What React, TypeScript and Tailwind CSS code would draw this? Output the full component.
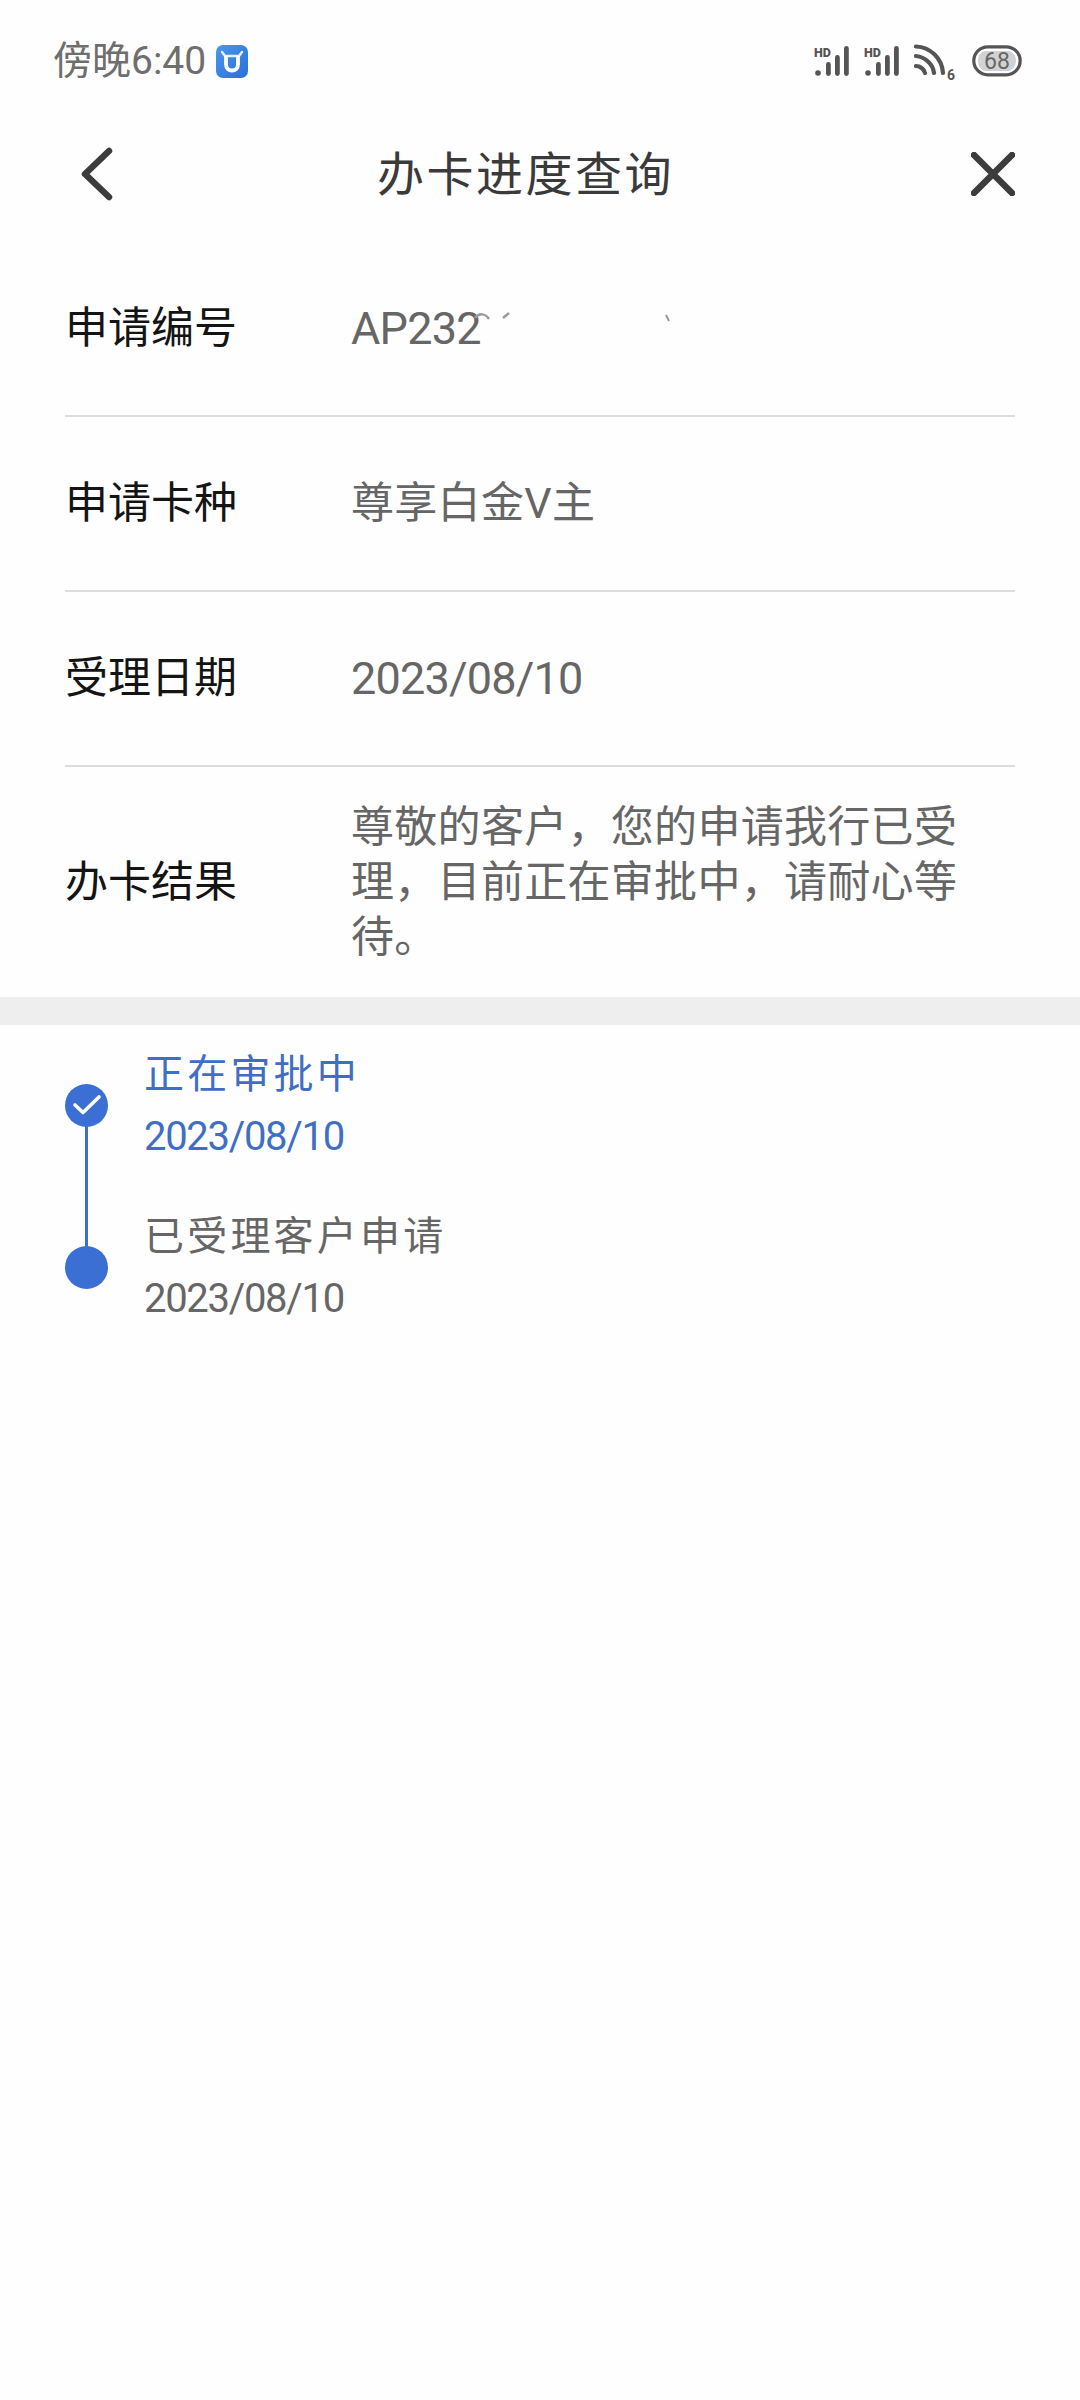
const font = { fontFamily: '"Roboto", "Noto Sans CJK SC", sans-serif' };

function Signal() {
  return (
    <svg width="36" height="32" viewBox="0 0 36 32" className="block">
      <text x="0" y="11.500" fontSize="12.500" fontWeight="900" fill="#555" fontFamily="Roboto, sans-serif">HD</text>
      <circle cx="4" cy="28" r="2.800" fill="#555" />
      <rect x="12" y="17" width="4.800" height="14" rx="2.400" fill="#555" />
      <rect x="21" y="10" width="4.800" height="21" rx="2.400" fill="#555" />
      <rect x="30" y="1" width="4.800" height="30" rx="2.400" fill="#555" />
    </svg>
  );
}

function Wifi() {
  return (
    <svg width="44" height="40" viewBox="0 0 44 40" className="block mt-[6px]">
      <g fill="none" stroke="#555" strokeWidth="4.200" strokeLinecap="round">
        <path d="M2 2.500 C16 3 28 14 29 29" />
        <path d="M2 12 C11 13 19 20 20 29" />
        <path d="M2 22 C6 22 10 25 11 29" />
      </g>
      <text x="33" y="36" fontSize="14" fontWeight="700" fill="#555" fontFamily="Roboto, sans-serif">6</text>
    </svg>
  );
}

function Battery() {
  return (
    <svg width="50" height="32" viewBox="0 0 50 32" className="block">
      <rect x="1.800" y="1.800" width="46.400" height="28" rx="14" fill="#fff" stroke="#555" strokeWidth="3.200" />
      <path d="M14 6 H36 C40 6 44 10.500 44 15.800 C44 21 40 26 36 26 H14 C9 26 6 21 6 15.800 C6 10.500 9 6 14 6 Z" fill="#d2d2d2" />
      <text x="25" y="24" textAnchor="middle" fontSize="23" fill="#666" fontFamily="Roboto, sans-serif">68</text>
    </svg>
  );
}

function CowBadge() {
  return (
    <svg width="32" height="33" viewBox="0 0 32 33" className="block ml-[10px]">
      <defs>
        <linearGradient id="cow" x1="0" y1="0" x2="1" y2="1">
          <stop offset="0" stopColor="#4b97ea" />
          <stop offset="1" stopColor="#2a6fdc" />
        </linearGradient>
      </defs>
      <rect width="32" height="33" rx="7" fill="url(#cow)" />
      <path d="M6 7 L9 11 H23 L26 7" fill="none" stroke="#e6f1ff" strokeWidth="2.400" strokeLinecap="round" strokeLinejoin="round" />
      <path d="M10 11 V19.500 C10 23 12.500 25.500 16 25.500 C19.500 25.500 22 23 22 19.500 V11" fill="none" stroke="#fff" strokeWidth="3.800" />
    </svg>
  );
}

function Row({ label, children, tall, digits }: { label: string; children: React.ReactNode; tall?: boolean; digits?: boolean }) {
  return (
    <div className={`flex items-center ${tall ? 'h-[230px]' : 'h-[175px] border-b-2 border-[#dcdcdc]'}`}>
      <div className="w-[286px] shrink-0 text-[43px] leading-[55px] text-[#141414]">{label}</div>
      <div className={`w-[620px] leading-[55px] text-[#666666] ${digits ? 'text-[45px] tracking-[-0.8px]' : 'text-[43px] tracking-[0.3px]'}`}>{children}</div>
    </div>
  );
}

function Step({ title, date, active, check }: { title: string; date: string; active?: boolean; check?: boolean }) {
  const color = active ? 'text-[#3f6fc4]' : 'text-[#666666]';
  return (
    <div className="flex items-center h-[162px]">
      <div className="w-[43px] h-[43px] rounded-full bg-[#3b6fd4] flex items-center justify-center shrink-0 z-10 mt-[-2px]">
        {check && (
          <svg width="30" height="24" viewBox="0 0 30 24">
            <path d="M3 12 L11 19.500 L27 4" fill="none" stroke="#fff" strokeWidth="3.600" strokeLinecap="round" strokeLinejoin="round" />
          </svg>
        )}
      </div>
      <div className="ml-[36px]">
        <div className={`text-[40px] leading-[62px] tracking-[3.200px] ${color}`}>{title}</div>
        <div className={`text-[40px] leading-[62px] tracking-[-1.3px] ${color}`}>{date}</div>
      </div>
    </div>
  );
}

export default function App() {
  return (
    <div className="w-[1080px] min-h-[2400px] bg-[#fefefe] overflow-hidden" style={font}>
      <div className="h-[122px] flex items-center justify-between pl-[53px] pr-[58px]">
        <div className="flex items-center">
          <span className="text-[39px] leading-none text-[#6e6e6e]">傍晚6:40</span>
          <CowBadge />
        </div>
        <div className="flex items-center gap-[14px]">
          <Signal />
          <Signal />
          <Wifi />
          <Battery />
        </div>
      </div>

      <div className="h-[104px] flex items-center justify-between pl-[80px] pr-[65px]">
        <svg width="34" height="54" viewBox="0 0 34 54" className="block">
          <path d="M29 4 L5 27 L29 50" fill="none" stroke="#3c3c3c" strokeWidth="6.500" strokeLinecap="round" strokeLinejoin="round" />
        </svg>
        <div className="text-[47px] leading-none tracking-[2.500px] text-[#3a3a3a] mr-[34px]">办卡进度查询</div>
        <svg width="44" height="44" viewBox="0 0 44 44" className="block">
          <path d="M3 3 L41 41 M41 3 L3 41" fill="none" stroke="#3c3c3c" strokeWidth="6.500" strokeLinecap="round" />
        </svg>
      </div>

      <div className="mt-[16px] px-[65px] w-[1080px]">
        <Row label="申请编号" digits>
          <span className="relative block">
            <span className="block h-[55px] overflow-hidden whitespace-nowrap">AP232</span>
            <svg width="210" height="20" viewBox="0 0 210 20" className="absolute left-[122px] top-[8px]">
              <path d="M2 9 C6 4 12 4 16 10 M30 9 L36 4" fill="none" stroke="#9a9a9a" strokeWidth="2.500" />
              <path d="M193 6 L196 12" fill="none" stroke="#9a9a9a" strokeWidth="2" />
            </svg>
          </span>
        </Row>
        <Row label="申请卡种">尊享白金V主</Row>
        <Row label="受理日期" digits>2023/08/10</Row>
        <Row label="办卡结果" tall>尊敬的客户，您的申请我行已受理，目前正在审批中，请耐心等待。</Row>
      </div>

      <div className="h-[28px] bg-[#eeeeee]" />

      <div className="relative pl-[65px]">
        <div className="absolute left-[85px] top-[90px] w-[3px] h-[150px] bg-[#3b6fd4]" />
        <Step title="正在审批中" date="2023/08/10" active check />
        <Step title="已受理客户申请" date="2023/08/10" />
      </div>
    </div>
  );
}
